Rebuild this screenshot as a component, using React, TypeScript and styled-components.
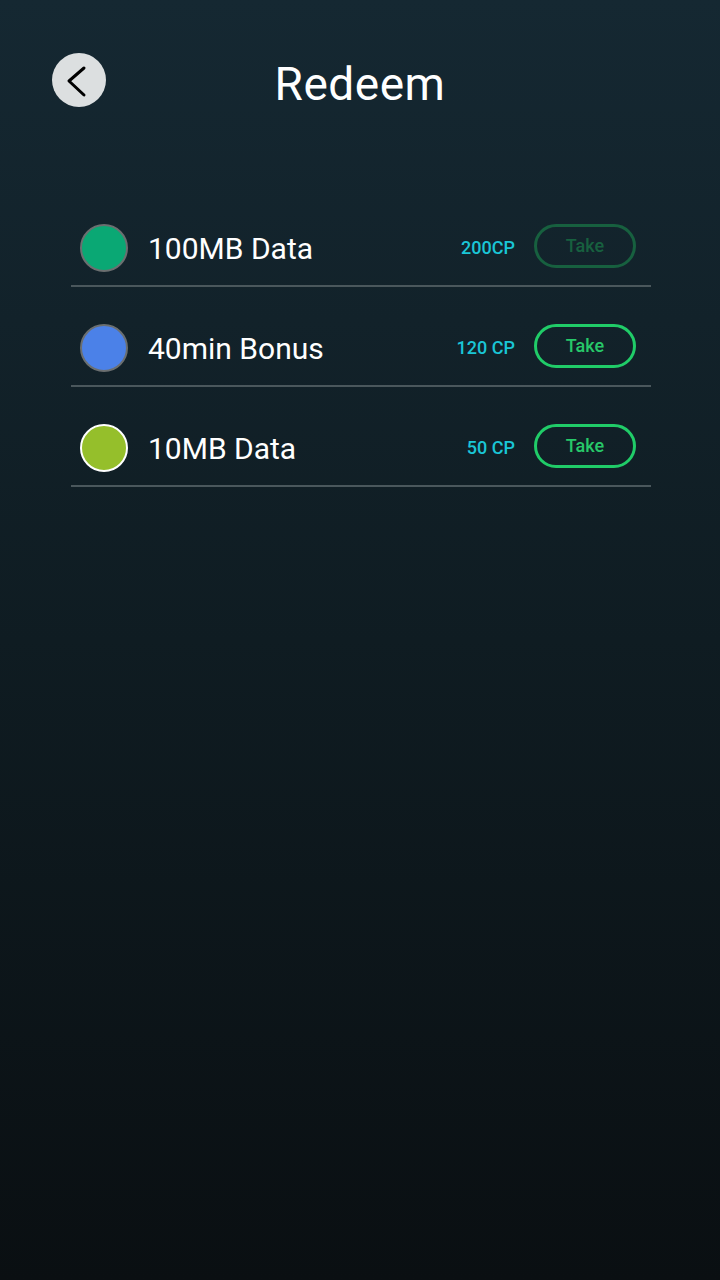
import styled, { createGlobalStyle } from 'styled-components';

const GlobalStyle = createGlobalStyle`
  html, body {
    margin: 0;
    padding: 0;
  }
  body {
    font-family: Roboto, "Noto Sans", sans-serif;
  }
`;

const Screen = styled.div`
  width: 720px;
  height: 1280px;
  background: linear-gradient(180deg, #152832 0%, #0f1c22 50%, #0a0f12 100%);
  color: #fff;
  overflow: hidden;
`;

const Header = styled.div`
  display: grid;
  grid-template-columns: 106px 1fr 106px;
  align-items: start;
  padding: 53px 52px 0 52px;
  height: 54px;
`;

const BackButton = styled.button`
  width: 54px;
  height: 54px;
  border-radius: 50%;
  border: none;
  background: #dcdfe0;
  display: flex;
  align-items: center;
  justify-content: center;
  padding: 0;
  cursor: pointer;
`;

const Title = styled.h1`
  margin: 0;
  text-align: center;
  font-size: 46px;
  font-weight: 400;
  letter-spacing: 0.5px;
  line-height: 54px;
  padding-top: 4px;
`;

const List = styled.ul`
  list-style: none;
  padding: 0;
  margin: 80px 69px 0 71px;
`;

const Row = styled.li`
  display: flex;
  align-items: center;
  padding: 37px 15px 13px 9px;
  border-bottom: 2px solid #4a575c;
`;

const Dot = styled.span<{ $color: string; $ring: string }>`
  width: 44px;
  height: 44px;
  border-radius: 50%;
  background: ${(p) => p.$color};
  border: 2px solid ${(p) => p.$ring};
  flex-shrink: 0;
`;

const Name = styled.span`
  margin-left: 20px;
  font-size: 30px;
  font-weight: 400;
  flex: 1;
`;

const Price = styled.span`
  color: #1ac6d6;
  font-size: 18px;
  font-weight: 500;
  margin-right: 19px;
  margin-bottom: 2px;
`;

const TakeButton = styled.button<{ $dim?: boolean }>`
  width: 102px;
  height: 44px;
  border-radius: 22px;
  background: transparent;
  border: 3px solid ${(p) => (p.$dim ? '#17603f' : '#20cc68')};
  color: ${(p) => (p.$dim ? '#17603f' : '#27c869')};
  font-family: Roboto, "Noto Sans", sans-serif;
  font-size: 18px;
  font-weight: 500;
  cursor: pointer;
  padding: 0 0 2px;
  margin-bottom: 4px;
`;

const items = [
  { name: '100MB Data', price: '200CP', color: '#0aa874', ring: '#6b6f70', dim: true },
  { name: '40min Bonus', price: '120 CP', color: '#4b81e8', ring: '#6b6f70', dim: false },
  { name: '10MB Data', price: '50 CP', color: '#95bf2b', ring: '#ffffff', dim: false },
];

const App = () => (
  <Screen>
    <GlobalStyle />
    <Header>
      <BackButton aria-label="Back">
        <svg width="54" height="54" viewBox="0 0 54 54">
          <path d="M32 15 L17 28 L32 42" fill="none" stroke="#000" strokeWidth="3" strokeLinecap="round" strokeLinejoin="round" />
        </svg>
      </BackButton>
      <Title>Redeem</Title>
      <span />
    </Header>
    <List>
      {items.map((item) => (
        <Row key={item.name}>
          <Dot $color={item.color} $ring={item.ring} />
          <Name>{item.name}</Name>
          <Price>{item.price}</Price>
          <TakeButton $dim={item.dim}>Take</TakeButton>
        </Row>
      ))}
    </List>
  </Screen>
);

export default App;
